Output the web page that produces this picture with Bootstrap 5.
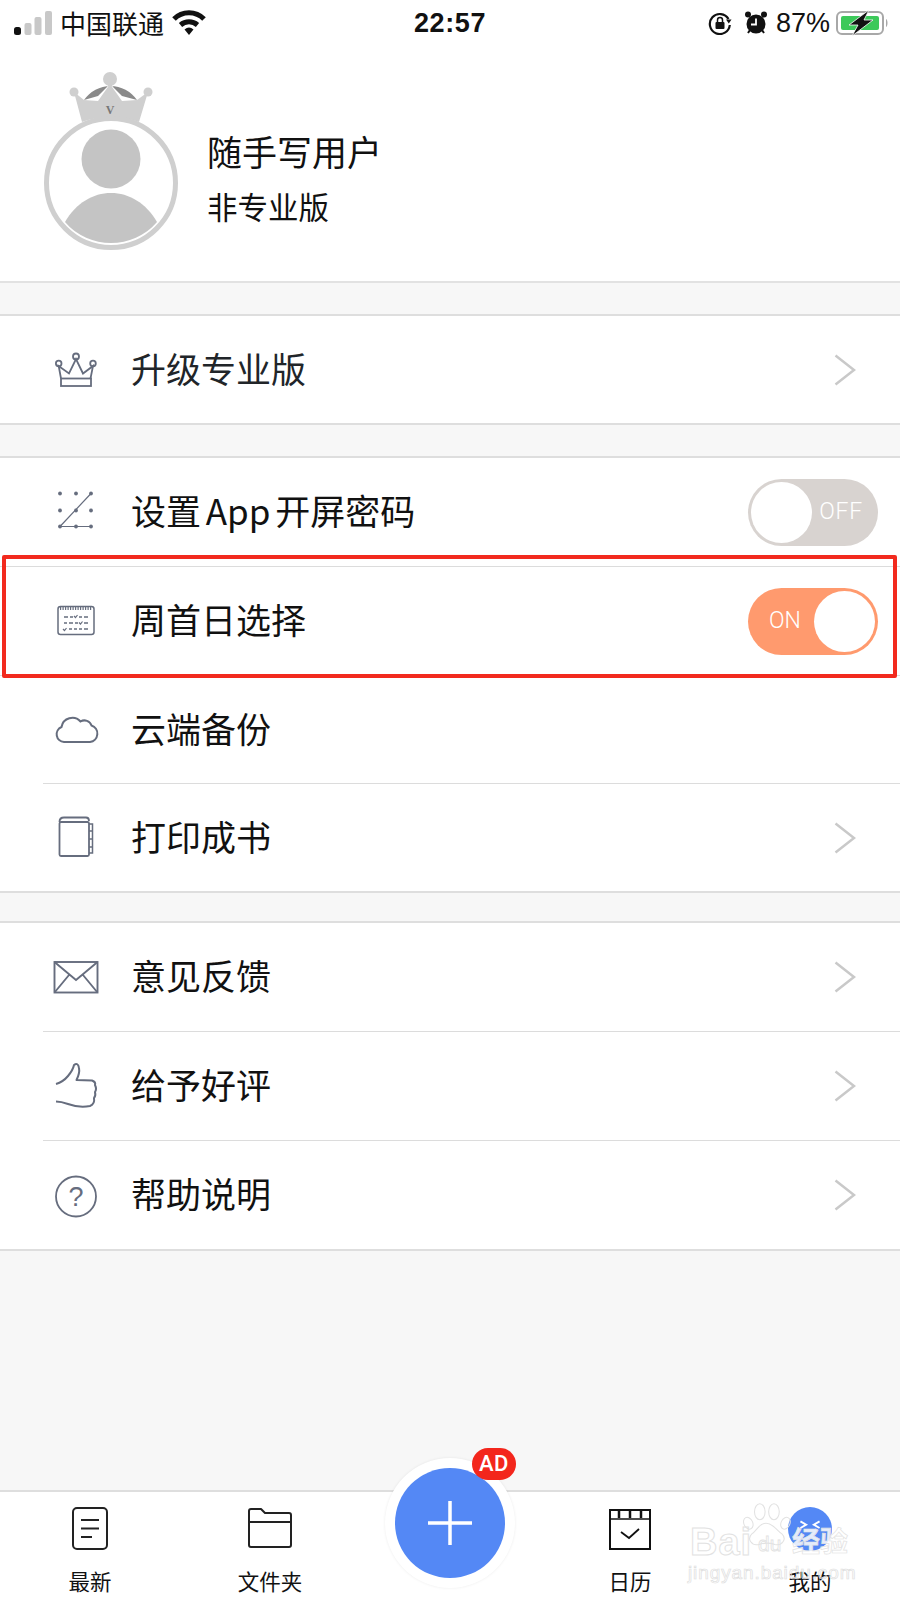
<!DOCTYPE html>
<html lang="zh">
<head>
<meta charset="utf-8">
<title>我的</title>
<link href="https://cdn.jsdelivr.net/npm/bootstrap@5.3.0/dist/css/bootstrap.min.css" rel="stylesheet">
<style>
html,body{margin:0;height:1600px;background:#f7f7f7;font-family:"Noto Sans CJK SC","Liberation Sans",sans-serif;color:#111}
.app-shell{width:900px;height:1600px;overflow:hidden}
.status-bar{height:50px;background:#fff;padding:0 10px 4px 14px;font-size:26px;line-height:1}
.clock{font-family:"Liberation Sans",sans-serif;font-weight:700;font-size:27px;letter-spacing:.6px;position:absolute;left:414px;top:10px}
.pct{font-family:"Liberation Sans",sans-serif;font-size:27px;margin-left:8px}
.lock-gap{margin-right:12px}
.batt-gap{margin-left:6px}
.profile{height:233px;background:#fff;border-bottom:2px solid #e2e2e2;padding-left:40px}
.avatar-art{align-self:flex-start;margin-top:20px}
.profile-text{margin-left:25px;margin-top:23px}
.uname{font-size:35px;line-height:48px}
.utier{font-size:30.5px;line-height:44px;margin-top:9px}
.band{height:31px;background:#f7f7f7}
.band-sm{height:28px}
.group-box{background:#fff;border-top:2px solid #dedede;border-bottom:2px solid #dedede}
.menu-row{height:108px;background:#fff;padding:0;border:0;border-radius:0!important}
.menu-short{height:107px}
.menu-row.top-rule{border-top:1.5px solid #dcdcdc;height:109px}
.inset-rule{border-bottom:1.5px solid #dcdcdc;margin-left:43px;height:109px}
.rule-both{border-top:1.5px solid #dcdcdc;padding-left:43px;height:108px}
.slot{width:66px;flex:none}
.slot-in{margin-left:43px}
.slot svg{display:block}
.row-label{margin-left:22px;font-size:35px;line-height:1;white-space:nowrap;padding-bottom:5px;word-spacing:-3px}
.row-end{margin-left:auto;margin-right:22px}
.chev{margin-right:44px}
.last-row{margin-left:43px;height:108px}
.switch-pill{width:130px;height:67px;border-radius:34px;position:relative;font-family:Roboto,"Liberation Sans",sans-serif;font-weight:300;font-size:23px;color:#fff;display:flex;align-items:center}
.switch-off{background:#d8d3d0;justify-content:flex-end;padding-right:15px;letter-spacing:.8px}
.switch-on{background:#ff9a6e;padding-left:21px}
.knob{position:absolute;top:3px;width:61px;height:61px;background:#fff;border-radius:50%}
.switch-off .knob{left:3px}
.switch-on .knob{right:3px}
.red-mark{position:absolute;left:2px;right:3px;top:-12px;bottom:-3px;border:4px solid #f22a1e;border-radius:2px;pointer-events:none}
.filler{background:#f7f7f7}
.tabbar{height:110px;background:#fff;border-top:2px solid #dedede;position:relative}
.tab-cell{width:180px;padding-top:15px;font-size:21.5px;line-height:1;text-align:center}
.tab-cell svg{display:block;margin:0 auto 19px}
.fab-ring{position:absolute;left:385px;top:-34px;width:130px;height:130px;border-radius:50%;background:#fff;box-shadow:0 0 3px rgba(0,0,0,.08);display:flex;align-items:center;justify-content:center}
.fab{width:110px;height:110px;border-radius:50%;background:#5488f5;display:flex;align-items:center;justify-content:center}
.ad-tag{position:absolute;left:472px;top:-44px;width:44px;height:32px;background:#f3261c;color:#fff;border-radius:16px;font-family:Roboto,"Liberation Sans",sans-serif;font-size:22px;line-height:32px;text-align:center;font-weight:500;letter-spacing:.5px}
.wm{position:absolute;left:688px;top:1524px;width:170px;height:60px;pointer-events:none;color:transparent;font-family:"Liberation Sans",sans-serif}
.wm-bai{position:absolute;left:2px;top:-2px;font-size:38px;line-height:40px;font-weight:700;-webkit-text-stroke:1px #e2e2e2;letter-spacing:1px}
.wm-du{position:absolute;left:70px;top:9px;font-size:21px;line-height:22px;-webkit-text-stroke:.8px #e2e2e2}
.wm-cn{position:absolute;left:104px;top:0;font-size:28px;line-height:32px;font-weight:700;color:rgba(255,255,255,.85);-webkit-text-stroke:.7px #e2e2e2;font-family:"Noto Sans CJK SC",sans-serif}
.wm-url{position:absolute;left:0;top:38px;font-size:19px;line-height:22px;letter-spacing:.9px;-webkit-text-stroke:.7px #dedede;white-space:nowrap}
</style>
</head>
<body>
<div class="app-shell d-flex flex-column position-relative">

  <div class="status-bar d-flex align-items-center position-relative">
    <svg width="38" height="24" viewBox="0 0 38 24" class="me-2"><rect x="0" y="16" width="7" height="8" rx="2.5" fill="#111"/><rect x="10.500" y="12" width="7" height="12" rx="2" fill="#c8c8c8"/><rect x="20.500" y="6" width="7" height="18" rx="2" fill="#c8c8c8"/><rect x="31" y="0" width="7" height="24" rx="2" fill="#c8c8c8"/></svg>
    <span>中国联通</span>
    <svg width="34" height="26" viewBox="0 0 34 26" class="ms-2"><path d="M2 9 A21 21 0 0 1 32 9" fill="none" stroke="#111" stroke-width="5"/><path d="M8.500 15 A13 13 0 0 1 25.500 15" fill="none" stroke="#111" stroke-width="5"/><path d="M12.500 19.500 Q17 15.500 21.500 19.500 L17 25Z" fill="#111"/></svg>
    <span class="clock">22:57</span>
    <div class="ms-auto d-flex align-items-center">
      <svg width="24" height="24" viewBox="0 0 24 24" class="lock-gap"><path d="M20.500 8 A10 10 0 1 0 21.800 14" fill="none" stroke="#111" stroke-width="2.200"/><path d="M18 8.500h5.500l-2.700 4z" fill="#111"/><rect x="7.500" y="11" width="9" height="7" rx="1" fill="#111"/><path d="M9.500 11V9a2.500 2.500 0 0 1 5 0v2" fill="none" stroke="#111" stroke-width="1.500"/></svg>
      <svg width="24" height="26" viewBox="0 0 24 26"><circle cx="12" cy="14" r="9.500" fill="#111"/><circle cx="4" cy="4.500" r="3" fill="#111"/><circle cx="20" cy="4.500" r="3" fill="#111"/><path d="M4 23l2-3M20 23l-2-3" stroke="#111" stroke-width="2"/><path d="M12 8.500V14.500H7" fill="none" stroke="#fff" stroke-width="1.800"/></svg>
      <span class="pct">87%</span>
      <svg width="54" height="26" viewBox="0 0 54 26" class="batt-gap"><rect x="1" y="2" width="46" height="22" rx="5" fill="none" stroke="#a8a8a8" stroke-width="2"/><rect x="5" y="6" width="38" height="14" rx="2" fill="#3cc95a"/><path d="M50 9c2 1 2 7 0 8z" fill="#a8a8a8"/><path d="M33 0 L13 15 H22 L16 26 L37 10 H28Z" fill="#111" stroke="#fff" stroke-width=".8"/></svg>
    </div>
  </div>

  <div class="profile d-flex">
    <svg width="142" height="180" viewBox="40 70 142 180" class="avatar-art">
      <path d="M84 100 A32 32 0 0 1 137 100 L122 96 110 84 98 96Z" fill="#8a8a8a"/>
      <path d="M74 92 L84 100 L98 101 L110 84 L122 101 L137 100 L148 92 L139 122 Q110 112 82 122Z" fill="#cfcfcf"/>
      <circle cx="110" cy="79" r="7" fill="#cfcfcf"/><circle cx="74" cy="92" r="4.500" fill="#cfcfcf"/><circle cx="148" cy="92" r="4.500" fill="#cfcfcf"/>
      <text x="110" y="114" text-anchor="middle" font-family="Liberation Serif,serif" font-size="12" font-weight="700" fill="#777">V</text>
      <circle cx="111" cy="183" r="64.500" fill="#fff" stroke="#cfcfcf" stroke-width="5"/>
      <circle cx="111" cy="159" r="29.500" fill="#c4c4c4"/>
      <path d="M65 222 C76 203 93 193 111 193 C129 193 146 203 157 222 C145 236 128 243 111 243 C94 243 77 236 65 222Z" fill="#c4c4c4"/>
    </svg>
    <div class="profile-text align-self-center">
      <div class="uname">随手写用户</div>
      <div class="utier">非专业版</div>
    </div>
  </div>

  <div class="band"></div>
  <div class="group-box list-group list-group-flush">
    <div class="menu-row menu-short list-group-item d-flex align-items-center">
      <div class="slot slot-in"><svg width="66" height="60" viewBox="0 0 66 60" fill="none" stroke="#666d7e" stroke-width="1.800"><rect x="18" y="38.500" width="30" height="7.500"/><path d="M18 38.500 L15.700 26 L26 33.500 L33 19 L40 33.500 L50 26 L47.500 38.500"/><circle cx="33" cy="16.500" r="3"/><circle cx="15.700" cy="23.500" r="2.800"/><circle cx="50" cy="23.500" r="2.800"/></svg></div>
      <span class="row-label">升级专业版</span>
      <svg class="ms-auto chev" width="22" height="32" viewBox="0 0 22 32" fill="none" stroke="#c9c9c9" stroke-width="2.500"><path d="M1.500 1.500 L20 16 L1.500 30.500"/></svg>
    </div>
  </div>

  <div class="band"></div>
  <div class="group-box">
    <div class="menu-row d-flex align-items-center">
      <div class="slot slot-in"><svg width="66" height="60" viewBox="0 0 66 60" fill="#666d7e"><circle cx="17" cy="11.500" r="1.900"/><circle cx="33" cy="11.500" r="1.900"/><circle cx="48" cy="11.500" r="1.900"/><circle cx="17" cy="28.500" r="1.900"/><circle cx="33" cy="28.500" r="1.900"/><circle cx="48" cy="28.500" r="1.900"/><circle cx="17" cy="44.500" r="1.900"/><circle cx="33" cy="44.500" r="1.900"/><circle cx="48" cy="44.500" r="1.900"/><path d="M48 11.500 L17 44.500 H48" fill="none" stroke="#666d7e" stroke-width="1.200"/></svg></div>
      <span class="row-label">设置 App 开屏密码</span>
      <div class="row-end switch-pill switch-off"><span class="knob"></span>OFF</div>
    </div>
    <div class="menu-row top-rule d-flex align-items-center position-relative">
      <div class="slot slot-in"><svg width="66" height="60" viewBox="0 0 66 60" fill="none" stroke="#666d7e" stroke-width="1.500"><rect x="15" y="15.500" width="36" height="28" rx="2.500"/><path d="M17 17.500H49" stroke-width="2.800" stroke-dasharray="1.200 1.300"/><path d="M21 26h4M27 26h3M36 26h3M41 26h4M21 32h3M26 32h4M32 32h3M41 32h4M26 38h3M31 38h3M36 38h3M41 38h4" stroke-width="1.300"/><path d="M31 25l1.500 1.500 2-2.500M36 31.500l1.500 1.500 2-2.500M20 38l1.500 1.500 2-2.500" stroke-width="1.200"/></svg></div>
      <span class="row-label">周首日选择</span>
      <div class="row-end switch-pill switch-on"><span class="knob"></span>ON</div>
      <div class="red-mark"></div>
    </div>
    <div class="rule-both d-flex align-items-center">
      <div class="slot"><svg width="66" height="60" viewBox="0 0 66 60" fill="none" stroke="#666d7e" stroke-width="2"><path d="M21 42 H47 A8.500 8.500 0 0 0 48.500 25.500 A7.500 7.500 0 0 0 37.500 21.500 A11 11 0 0 0 18.500 27 A7.800 7.800 0 0 0 21 42Z"/></svg></div>
      <span class="row-label">云端备份</span>
    </div>
    <div class="inset-rule" style="height:0"></div>
    <div class="menu-row menu-short d-flex align-items-center">
      <div class="slot slot-in"><svg width="66" height="60" viewBox="0 0 66 60" fill="none" stroke="#666d7e" stroke-width="1.800"><rect x="16.500" y="14" width="29.500" height="34" rx="1.500"/><path d="M16.500 14 Q16.500 9.500 21 9.500 H43 Q46 9.500 46 13"/><path d="M46 16h3.500v7h-3.500M46 23h3.500v8h-3.500M46 31h3.500v8h-3.500M46 39h3.500v6h-3.500" stroke-width="1.500"/></svg></div>
      <span class="row-label">打印成书</span>
      <svg class="ms-auto chev" width="22" height="32" viewBox="0 0 22 32" fill="none" stroke="#c9c9c9" stroke-width="2.500"><path d="M1.500 1.500 L20 16 L1.500 30.500"/></svg>
    </div>
  </div>

  <div class="band band-sm"></div>
  <div class="group-box">
    <div class="inset-rule d-flex align-items-center">
      <div class="slot"><svg width="66" height="60" viewBox="0 0 66 60" fill="none" stroke="#666d7e" stroke-width="1.900"><rect x="11.500" y="15" width="43" height="30.500"/><path d="M11.500 15 L33 33 L54.500 15M11.500 45.500 L26 28M54.500 45.500 L40 28"/></svg></div>
      <span class="row-label">意见反馈</span>
      <svg class="ms-auto chev" width="22" height="32" viewBox="0 0 22 32" fill="none" stroke="#c9c9c9" stroke-width="2.500"><path d="M1.500 1.500 L20 16 L1.500 30.500"/></svg>
    </div>
    <div class="inset-rule d-flex align-items-center">
      <div class="slot"><svg width="66" height="60" viewBox="0 0 66 60" fill="none" stroke="#666d7e" stroke-width="2" stroke-linejoin="round"><path d="M13 28 Q20 26 25 20 Q30 14 31 9 Q35 6 36 12 Q37 17 33.500 24 L49 24.500 Q53 26 52 29 Q54 33 52 36 Q53 40 51 42 Q52 48 47 50 Q36 52 25 48 Q18 45.500 13 45.500"/></svg></div>
      <span class="row-label">给予好评</span>
      <svg class="ms-auto chev" width="22" height="32" viewBox="0 0 22 32" fill="none" stroke="#c9c9c9" stroke-width="2.500"><path d="M1.500 1.500 L20 16 L1.500 30.500"/></svg>
    </div>
    <div class="last-row d-flex align-items-center">
      <div class="slot"><svg width="66" height="60" viewBox="0 0 66 60"><circle cx="33" cy="31.500" r="20" fill="none" stroke="#666d7e" stroke-width="1.800"/><text x="33" y="41" text-anchor="middle" font-family="Liberation Sans,sans-serif" font-size="27" fill="#666d7e">?</text></svg></div>
      <span class="row-label">帮助说明</span>
      <svg class="ms-auto chev" width="22" height="32" viewBox="0 0 22 32" fill="none" stroke="#c9c9c9" stroke-width="2.500"><path d="M1.500 1.500 L20 16 L1.500 30.500"/></svg>
    </div>
  </div>

  <div class="filler flex-grow-1"></div>

  <nav class="tabbar d-flex">
    <div class="tab-cell"><svg width="36" height="44" viewBox="0 0 36 44" fill="none" stroke="#222" stroke-width="2"><rect x="1" y="1" width="34" height="41" rx="4"/><path d="M9 13H27M9 21.500H27M9 30H20"/></svg>最新</div>
    <div class="tab-cell"><svg width="46" height="44" viewBox="0 0 46 44" fill="none" stroke="#222" stroke-width="2" stroke-linejoin="round"><path d="M2 4 Q2 2 4 2 H14 L18 6 H42 Q44 6 44 8 V38 Q44 40 42 40 H4 Q2 40 2 38Z"/><path d="M2 15H44"/></svg>文件夹</div>
    <div class="tab-cell"></div>
    <div class="tab-cell"><svg width="42" height="44" viewBox="0 0 42 44" fill="none" stroke="#111" stroke-width="2"><rect x="1" y="3" width="40" height="39"/><path d="M1 12H41" stroke-width="1.500"/><path d="M10 3v8M21 3v8M32 3v8" stroke-width="2.500"/><path d="M12 25l8 6 10-9" stroke-width="1.800"/></svg>日历</div>
    <div class="tab-cell"><svg width="46" height="44" viewBox="0 0 46 46"><circle cx="23" cy="23" r="23" fill="#5488f5"/><path d="M13 15l6 3.500-6 3.500M33 15l-6 3.500 6 3.500" fill="none" stroke="#fff" stroke-width="2"/></svg>我的</div>
    <div class="fab-ring"><div class="fab"><svg width="46" height="46" viewBox="0 0 46 46"><path d="M23 1V45M1 23H45" stroke="#fff" stroke-width="3.500"/></svg></div></div>
    <div class="ad-tag">AD</div>
  </nav>

  <div class="wm">
    <svg width="60" height="46" viewBox="0 0 60 52" style="position:absolute;left:48px;top:-22px" fill="none" stroke="#e2e2e2" stroke-width="1.200"><ellipse cx="10" cy="24" rx="5" ry="7" transform="rotate(-25 10 24)"/><ellipse cx="23" cy="11" rx="6" ry="9"/><ellipse cx="39" cy="11" rx="6" ry="9"/><ellipse cx="52" cy="24" rx="5" ry="7" transform="rotate(25 52 24)"/><path d="M30 24 C22 24 20 32 14 36 C8 42 14 50 22 48 C28 46 34 46 40 48 C48 50 54 42 48 36 C42 32 38 24 30 24Z"/></svg>
    <span class="wm-bai">Bai</span><span class="wm-du">du</span><span class="wm-cn">经验</span>
    <span class="wm-url">jingyan.baidu.com</span>
  </div>
</div>
</body>
</html>
